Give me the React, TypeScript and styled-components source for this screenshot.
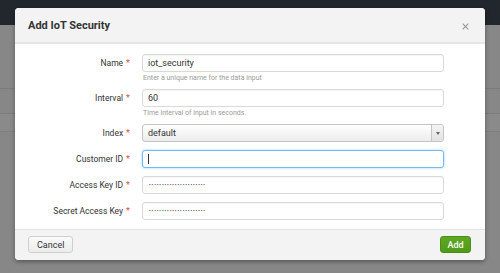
import React from 'react';
import styled, { createGlobalStyle } from 'styled-components';

const GlobalStyle = createGlobalStyle`
  html, body {
    margin: 0;
    padding: 0;
    width: 500px;
    height: 273px;
    overflow: hidden;
    font-family: Roboto, "Liberation Sans", Arial, sans-serif;
  }
`;

const Page = styled.div`
  position: relative;
  width: 500px;
  height: 273px;
  background: #878787;
  display: flex;
  flex-direction: column;
`;

const TopBar = styled.div`
  height: 25px;
  background: #22262d;
`;

const PageBody = styled.div`
  flex: 1;
  padding-top: 63px;
  display: flex;
  flex-direction: column;
`;

const PageRule = styled.div<{ band?: boolean }>`
  height: ${({ band }) => (band ? '17px' : '24px')};
  border-top: 1px solid #7b7b7b;
  background: ${({ band }) => (band ? '#8a8a8a' : 'transparent')};
  border-bottom: ${({ band }) => (band ? '1px solid #7e7e7e' : 'none')};
`;

const Modal = styled.div`
  position: absolute;
  top: 8px;
  left: 15px;
  width: 470px;
  height: 252px;
  background: #fff;
  border-radius: 4px;
  box-shadow: 0 2px 4px rgba(0, 0, 0, 0.35);
  display: flex;
  flex-direction: column;
  overflow: hidden;
`;

const Header = styled.div`
  box-sizing: border-box;
  height: 36px;
  background: #f3f3f3;
  border-bottom: 2px solid #e6e6e6;
  display: flex;
  align-items: center;
  justify-content: space-between;
  padding: 0 16px 0 13px;
`;

const Title = styled.h2`
  margin: 0;
  font-size: 11px;
  font-weight: 700;
  color: #333;
  padding-top: 1px;
`;

const CloseButton = styled.button`
  border: none;
  background: none;
  padding: 0;
  color: #999;
  display: flex;
  align-items: center;
  margin-top: 3px;
  svg {
    width: 7px;
    height: 7px;
  }
`;

const Body = styled.div`
  flex: 1;
  padding: 10px 0 0;
  display: flex;
  flex-direction: column;
  gap: 8px;
`;

const Row = styled.div`
  display: grid;
  grid-template-columns: 115px 302px;
  column-gap: 12px;
  align-items: start;
`;

const Label = styled.label`
  height: 18px;
  display: flex;
  align-items: center;
  justify-content: flex-end;
  font-size: 8.5px;
  color: #333;
  white-space: nowrap;
`;

const Required = styled.span`
  color: #d6563c;
  margin-left: 3px;
  font-size: 9px;
`;

const Control = styled.div`
  display: flex;
  flex-direction: column;
  position: relative;
`;

const TextInput = styled.input<{ focused?: boolean }>`
  box-sizing: border-box;
  width: 302px;
  height: 18px;
  margin: 0;
  padding: 0 5px;
  border: 1px solid ${({ focused }) => (focused ? '#72b8f2' : '#d9d9d9')};
  border-radius: 3px;
  background: #fff;
  font-family: Roboto, "Liberation Sans", Arial, sans-serif;
  font-size: 9px;
  color: #333;
  outline: none;
  box-shadow: ${({ focused }) =>
    focused ? '0 0 3px rgba(110, 180, 245, 0.6)' : 'inset 0 1px 1px rgba(0,0,0,0.04)'};
`;

const PasswordInput = styled(TextInput)`
  font-size: 5px;
  letter-spacing: 0.9px;
  padding-left: 6px;
`;

const Caret = styled.span`
  position: absolute;
  left: 6px;
  top: 4px;
  width: 1px;
  height: 10px;
  background: #333;
`;

const Help = styled.div`
  font-size: 7px;
  color: #9a9a9a;
  margin-top: 3px;
  height: 6px;
  line-height: 7px;
  padding-left: 1px;
`;

const Select = styled.div`
  box-sizing: border-box;
  width: 302px;
  height: 18px;
  border: 1px solid #c4c4c4;
  border-radius: 3px;
  background: linear-gradient(#ffffff, #ececec);
  display: flex;
  align-items: stretch;
  font-size: 9px;
  color: #333;
`;

const SelectText = styled.span`
  flex: 1;
  display: flex;
  align-items: center;
  padding-left: 5px;
`;

const SelectArrow = styled.span`
  width: 11px;
  border-left: 1px solid #c4c4c4;
  display: flex;
  align-items: center;
  justify-content: center;
  background: linear-gradient(#f4f4f4, #e2e2e2);
  border-radius: 0 2px 2px 0;
  &::before {
    content: '';
    border-left: 2px solid transparent;
    border-right: 2px solid transparent;
    border-top: 3px solid #666;
  }
`;

const Footer = styled.div`
  height: 31px;
  box-sizing: border-box;
  background: #f3f3f3;
  border-top: 1px solid #e3e3e3;
  display: flex;
  align-items: flex-start;
  justify-content: space-between;
  padding: 6px 14px 0 13px;
`;

const Button = styled.button<{ primary?: boolean }>`
  height: 17px;
  box-sizing: border-box;
  padding: 0 ${({ primary }) => (primary ? '6px' : '8px')};
  min-width: ${({ primary }) => (primary ? '31px' : '42px')};
  border-radius: 3px;
  font-family: Roboto, "Liberation Sans", Arial, sans-serif;
  font-size: 9px;
  font-weight: ${({ primary }) => (primary ? 500 : 400)};
  color: ${({ primary }) => (primary ? '#fff' : '#333')};
  border: 1px solid ${({ primary }) => (primary ? '#4a8d17' : '#cfcfcf')};
  background: ${({ primary }) =>
    primary ? 'linear-gradient(#5fa823, #4f9a17)' : 'linear-gradient(#fafafa, #ececec)'};
  cursor: pointer;
`;

const dots = '\u2022'.repeat(22);

export default function App() {
  return (
    <>
      <GlobalStyle />
      <Page>
        <TopBar />
        <PageBody>
          <PageRule />
          <PageRule band />
        </PageBody>

        <Modal>
          <Header>
            <Title>Add IoT Security</Title>
            <CloseButton aria-label="Close">
              <svg viewBox="0 0 10 10" fill="none" stroke="currentColor" strokeWidth={1.6}>
                <path d="M1 1l8 8M9 1l-8 8" />
              </svg>
            </CloseButton>
          </Header>

          <Body>
            <Row>
              <Label>Name<Required>*</Required></Label>
              <Control>
                <TextInput readOnly defaultValue="iot_security" />
                <Help>Enter a unique name for the data input</Help>
              </Control>
            </Row>
            <Row>
              <Label>Interval<Required>*</Required></Label>
              <Control>
                <TextInput readOnly defaultValue="60" />
                <Help>Time interval of input in seconds.</Help>
              </Control>
            </Row>
            <Row>
              <Label>Index<Required>*</Required></Label>
              <Control>
                <Select>
                  <SelectText>default</SelectText>
                  <SelectArrow />
                </Select>
              </Control>
            </Row>
            <Row>
              <Label>Customer ID<Required>*</Required></Label>
              <Control>
                <TextInput readOnly focused defaultValue="" />
                <Caret />
              </Control>
            </Row>
            <Row>
              <Label>Access Key ID<Required>*</Required></Label>
              <Control>
                <PasswordInput readOnly defaultValue={dots} />
              </Control>
            </Row>
            <Row>
              <Label>Secret Access Key<Required>*</Required></Label>
              <Control>
                <PasswordInput readOnly defaultValue={dots} />
              </Control>
            </Row>
          </Body>

          <Footer>
            <Button>Cancel</Button>
            <Button primary>Add</Button>
          </Footer>
        </Modal>
      </Page>
    </>
  );
}
